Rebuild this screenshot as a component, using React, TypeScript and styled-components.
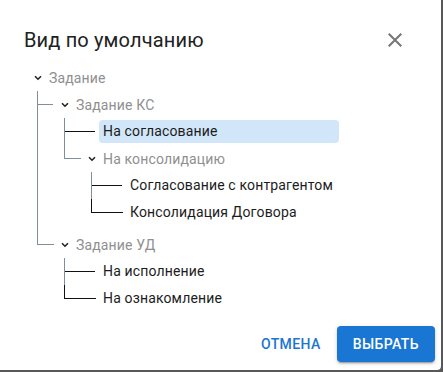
import { Fragment } from 'react';
import styled, { createGlobalStyle, css } from 'styled-components';

const GlobalStyle = createGlobalStyle`
  html, body {
    margin: 0;
    padding: 0;
    background: #585858;
  }
  body {
    font-family: Roboto, "Noto Sans", "Liberation Sans", sans-serif;
  }
`;

const Dialog = styled.div`
  width: 441px;
  height: 370px;
  background: #fff;
  border-radius: 0 0 4px 0;
  display: flex;
  flex-direction: column;
  box-sizing: border-box;
`;

const Header = styled.div`
  display: flex;
  align-items: center;
  justify-content: space-between;
  height: 32px;
  padding: 24px 26px 0 24px;
`;

const Title = styled.h2`
  margin: 0;
  font-size: 20px;
  font-weight: 400;
  letter-spacing: 0.15px;
  color: #212121;
  line-height: 32px;
`;

const CloseButton = styled.button`
  width: 40px;
  height: 40px;
  border: 0;
  background: transparent;
  padding: 0;
  display: flex;
  align-items: center;
  justify-content: center;
  color: #757575;
  cursor: pointer;
`;

const Content = styled.div`
  flex: 1;
  padding: 8px 0 0 30px;
`;

const TreeList = styled.ul<{ $nested?: boolean }>`
  list-style: none;
  margin: 0;
  width: 309px;
  box-sizing: border-box;
  padding: 0;
  ${(p) =>
    p.$nested &&
    css`
      width: auto;
      padding: 0 0 2.5px 27px;
    `}
`;

const Item = styled.li<{ $last: boolean; $leaf: boolean; $root: boolean }>`
  position: relative;

  ${(p) =>
    !p.$root &&
    css`
      &::before {
        content: '';
        position: absolute;
        left: -20px;
        top: 0;
        height: 13px;
        width: ${p.$leaf ? 31 : 16}px;
        border-bottom: 1px solid ${p.$leaf ? '#111' : '#7e8f9b'};
        border-left: ${p.$last ? `1px solid ${p.$leaf ? '#111' : '#7e8f9b'}` : '0'};
      }
    `}

  ${(p) =>
    !p.$root &&
    !p.$last &&
    css`
      &::after {
        content: '';
        position: absolute;
        left: -20px;
        top: 0;
        bottom: 0;
        width: 1px;
        background: #7e8f9b;
      }
    `}
`;

const Row = styled.div`
  display: flex;
  align-items: center;
  height: 27px;
`;

const Chevron = styled.span`
  width: 16px;
  height: 16px;
  margin-right: 3px;
  display: flex;
  align-items: center;
  justify-content: center;
  color: #222;
`;

const GroupLabel = styled.span`
  font-size: 14px;
  letter-spacing: 0.15px;
  color: #8f8f8f;
  white-space: nowrap;
`;

const LeafLabel = styled.span<{ $selected?: boolean }>`
  flex: 1;
  margin-left: 15px;
  padding: 0 4px;
  height: 23px;
  line-height: 23px;
  border-radius: 4px;
  font-size: 14px;
  letter-spacing: 0.15px;
  color: #1c1c1c;
  white-space: nowrap;
  background: ${(p) => (p.$selected ? '#d2e6fa' : 'transparent')};
`;

const Actions = styled.div`
  display: flex;
  justify-content: flex-end;
  align-items: center;
  gap: 8px;
  padding: 8px 6px 8px 8px;
`;

const Button = styled.button<{ $variant: 'text' | 'contained' }>`
  font-family: Roboto, "Noto Sans", "Liberation Sans", sans-serif;
  font-size: 14px;
  font-weight: 500;
  letter-spacing: 0.4px;
  line-height: 24.5px;
  text-transform: uppercase;
  border: 0;
  border-radius: 4px;
  min-width: 64px;
  cursor: pointer;
  ${(p) =>
    p.$variant === 'contained'
      ? css`
          padding: 6px 16px;
          background: #1976d2;
          color: #fff;
          box-shadow: 0px 3px 1px -2px rgba(0, 0, 0, 0.2), 0px 2px 2px 0px rgba(0, 0, 0, 0.14),
            0px 1px 5px 0px rgba(0, 0, 0, 0.12);
        `
      : css`
          padding: 6px 8px;
          background: transparent;
          color: #1976d2;
        `}
`;

type Node = { label: string; selected?: boolean; children?: Node[] };

const tree: Node[] = [
  {
    label: 'Задание',
    children: [
      {
        label: 'Задание КС',
        children: [
          { label: 'На согласование', selected: true },
          {
            label: 'На консолидацию',
            children: [{ label: 'Согласование с контрагентом' }, { label: 'Консолидация Договора' }],
          },
        ],
      },
      {
        label: 'Задание УД',
        children: [{ label: 'На исполнение' }, { label: 'На ознакомление' }],
      },
    ],
  },
];

function ChevronIcon() {
  return (
    <svg width="8" height="6" viewBox="0 0 8 6">
      <polyline points="1,1.2 4,4.2 7,1.2" fill="none" stroke="currentColor" strokeWidth="1.6" />
    </svg>
  );
}

function CloseIcon() {
  return (
    <svg width="24" height="24" viewBox="0 0 24 24" fill="currentColor">
      <path d="M19 6.41 17.59 5 12 10.59 6.41 5 5 6.41 10.59 12 5 17.59 6.41 19 12 13.41 17.59 19 19 17.59 13.41 12z" />
    </svg>
  );
}

function TreeNodes({ nodes, root }: { nodes: Node[]; root?: boolean }) {
  return (
    <>
      {nodes.map((node, i) => {
        const leaf = !node.children;
        return (
          <Item key={node.label} $last={i === nodes.length - 1} $leaf={leaf} $root={!!root}>
            <Row>
              {leaf ? (
                <LeafLabel $selected={node.selected}>{node.label}</LeafLabel>
              ) : (
                <Fragment>
                  <Chevron>
                    <ChevronIcon />
                  </Chevron>
                  <GroupLabel>{node.label}</GroupLabel>
                </Fragment>
              )}
            </Row>
            {node.children && (
              <TreeList $nested>
                <TreeNodes nodes={node.children} />
              </TreeList>
            )}
          </Item>
        );
      })}
    </>
  );
}

export default function App() {
  return (
    <>
      <GlobalStyle />
      <Dialog>
        <Header>
          <Title>Вид по умолчанию</Title>
          <CloseButton aria-label="Закрыть">
            <CloseIcon />
          </CloseButton>
        </Header>
        <Content>
          <TreeList>
            <TreeNodes nodes={tree} root />
          </TreeList>
        </Content>
        <Actions>
          <Button $variant="text">Отмена</Button>
          <Button $variant="contained">Выбрать</Button>
        </Actions>
      </Dialog>
    </>
  );
}
